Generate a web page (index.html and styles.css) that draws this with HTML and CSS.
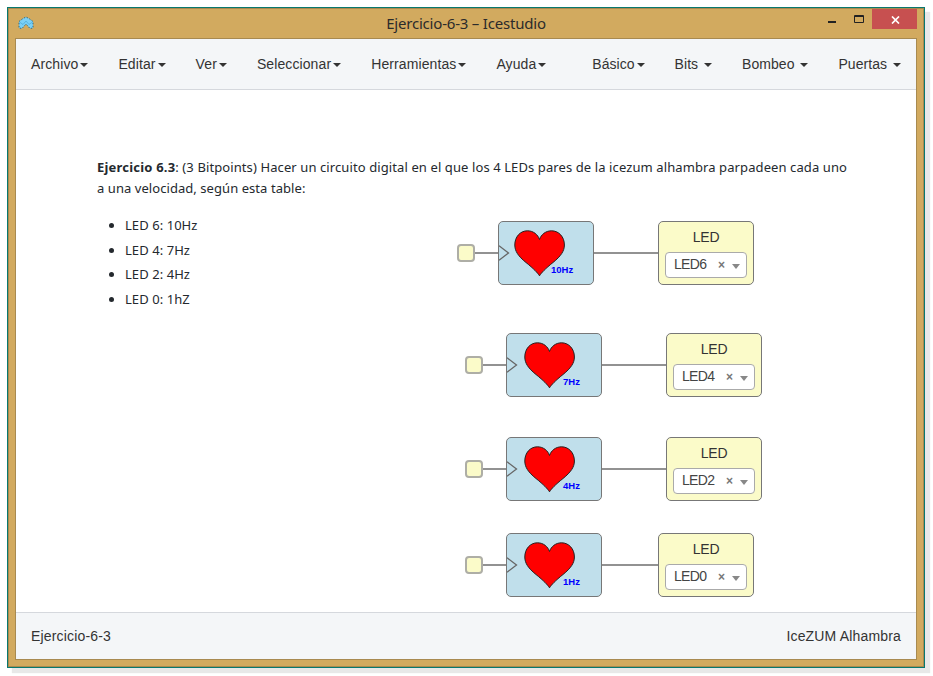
FILE: index.html
```html
<!DOCTYPE html>
<html lang="es">
<head>
<meta charset="utf-8">
<title>Ejercicio-6-3 – Icestudio</title>
<link rel="stylesheet" href="styles.css">
</head>
<body>
<svg class="defs" width="0" height="0">
  <symbol id="heart" viewBox="0 0 52 48">
    <path d="M25.500 45.800C23.800 43 19.500 38.500 12 32.500C4 26 .8 21 .8 15C.8 7 6 .8 13.500 .8C19.500 .8 24 4.800 25.500 9.500C27 4.800 31.500 .8 37.500 .8C45 .8 50.400 7 50.400 15C50.400 21 47 26 39 32.500C31.500 38.500 27.200 43 25.500 45.800Z" fill="#f00" stroke="#222" stroke-width="1"/>
  </symbol>
</svg>
<div class="window">
  <header class="titlebar">
    <svg class="logo" width="16" height="14" viewBox="0 0 16 14">
      <path d="M1 5.500L5 2.500L8 1L11 2.500L15 5.500V12L12 12.500L8 8L4 12.500L1 12Z" fill="#7bd0f6"/>
      <path d="M1 5.500L5 2.500L8 1L11 2.500L15 5.500V12L12 12.500L8 8L4 12.500L1 12Z" fill="none" stroke="#326b80" stroke-width="1" stroke-dasharray="1.500 1.500"/>
      <path d="M1.500 6L5 8.500L8 5L11 8.500L14.500 6" fill="none" stroke="#49a9d8" stroke-width=".7"/>
    </svg>
    <h1 class="title"><span>Ejercicio-6-3 – Icestudio</span></h1>
    <div class="controls">
      <svg width="37" height="20" viewBox="0 0 37 20"><path d="M0 12h8v2H0z" fill="#222"/><path d="M26.500 6.500h9v7h-9zM26.500 7.500h9" fill="none" stroke="#222"/></svg>
      <span class="close"><svg width="9" height="8" viewBox="0 0 9 8"><path d="M1 .5L8 7.500M8 .5L1 7.500" stroke="#fff" stroke-width="1.700"/></svg></span>
    </div>
  </header>
  <main class="app">
    <nav class="menu">
      <ul>
        <li>Archivo<b class="caret"></b></li><li>Editar<b class="caret"></b></li><li>Ver<b class="caret"></b></li><li>Seleccionar<b class="caret"></b></li><li>Herramientas<b class="caret"></b></li><li>Ayuda<b class="caret"></b></li>
      </ul>
      <ul class="right">
        <li>Básico<b class="caret"></b></li><li>Bits <b class="caret"></b></li><li>Bombeo <b class="caret"></b></li><li>Puertas <b class="caret"></b></li>
      </ul>
    </nav>
    <section class="canvas">
      <article class="note">
        <p><span class="first"><strong>Ejercicio 6.3</strong>: (3 Bitpoints) Hacer un circuito digital en el que los 4 LEDs pares de la icezum alhambra parpadeen cada uno</span><br>a una velocidad, según esta table:</p>
        <ul>
          <li>LED 6: 10Hz</li>
          <li>LED 4: 7Hz</li>
          <li>LED 2: 4Hz</li>
          <li>LED 0: 1hZ</li>
        </ul>
      </article>
      <svg class="wires" width="900" height="522">
        <path d="M458 163h25M578 163h64M466 275h25M586 275h64M466 379h25M586 379h64M466 475h25M586 475h56" stroke="#929292" stroke-width="2"/>
      </svg>
      <i class="port p1"></i>
      <div class="block b1"><svg class="arrow" width="11" height="16"><path d="M0 .8L9.500 8L0 15.200"/></svg><svg class="heart"><use href="#heart"/></svg><span class="freq">10Hz</span></div>
      <div class="led l1"><span>LED</span><div class="select"><span>LED6</span><em>×</em><i></i></div></div>

      <i class="port p2"></i>
      <div class="block b2"><svg class="arrow" width="11" height="16"><path d="M0 .8L9.500 8L0 15.200"/></svg><svg class="heart"><use href="#heart"/></svg><span class="freq">7Hz</span></div>
      <div class="led l2"><span>LED</span><div class="select"><span>LED4</span><em>×</em><i></i></div></div>

      <i class="port p3"></i>
      <div class="block b3"><svg class="arrow" width="11" height="16"><path d="M0 .8L9.500 8L0 15.200"/></svg><svg class="heart"><use href="#heart"/></svg><span class="freq">4Hz</span></div>
      <div class="led l3"><span>LED</span><div class="select"><span>LED2</span><em>×</em><i></i></div></div>

      <i class="port p4"></i>
      <div class="block b4"><svg class="arrow" width="11" height="16"><path d="M0 .8L9.500 8L0 15.200"/></svg><svg class="heart"><use href="#heart"/></svg><span class="freq">1Hz</span></div>
      <div class="led l4"><span>LED</span><div class="select"><span>LED0</span><em>×</em><i></i></div></div>
    </section>
    <footer class="status"><span>Ejercicio-6-3</span><span>IceZUM Alhambra</span></footer>
  </main>
</div>
</body>
</html>
```
FILE: styles.css
```css
* { box-sizing: border-box; }
body {
  margin: 0;
  padding: 7px 8px 8px 7px;
  height: 676px;
  overflow: hidden;
  background: #fff;
  color: #333;
  font: 14px/20px "Liberation Sans", Arial, sans-serif;
}
ul, p, h1 { margin: 0; padding: 0; }
.defs { position: absolute; }
.window {
  width: 918px;
  height: 661px;
  display: flex;
  flex-direction: column;
  padding: 0 7px 7px;
  border: 1px solid #08786e;
  background: #d2aa5f;
  box-shadow: inset 0 0 0 1px #a88a50, 5px 5px 1px #e8e8e8;
}
.titlebar {
  height: 30px;
  flex: none;
  display: grid;
  grid-template-columns: 90px 1fr 90px;
  align-items: start;
}
.logo { margin: 8px 0 0 3px; }
.title {
  color: #2b2b2b;
  font: 15px/30px "Noto Sans", "Open Sans", sans-serif;
  text-align: center;
  white-space: nowrap;
}
.title span { letter-spacing: -.2px; }
.controls { display: flex; justify-content: flex-end; padding-top: 1px; gap: 7px; }
.close {
  width: 45px;
  height: 20px;
  flex: none;
  display: flex;
  align-items: center;
  justify-content: center;
  padding: 1px 0 0 1px;
  background: #c75050;
}
.app {
  flex: 1;
  min-height: 0;
  display: flex;
  flex-direction: column;
  border: 1px solid #a88a50;
  background: #fff;
}
.menu {
  height: 51px;
  flex: none;
  display: flex;
  justify-content: space-between;
  border-bottom: 1px solid #d5d8dd;
  background: #f4f6f8;
}
.menu ul { display: flex; list-style: none; }
.menu li { padding: 15px; white-space: nowrap; letter-spacing: .1px; }
.menu .right li { letter-spacing: .05px; }
.caret {
  display: inline-block;
  margin-left: 2px;
  vertical-align: middle;
  border: 4px solid transparent;
  border-top-color: #333;
  border-bottom: 0;
}
.canvas { position: relative; flex: 1; overflow: hidden; }
.note {
  padding: 67px 0 0 81px;
  color: #24292e;
  font: 13px/21px "Noto Sans", "Open Sans", sans-serif;
  letter-spacing: .06px;
  white-space: nowrap;
}
.first { letter-spacing: .1px; }
.first strong { letter-spacing: .2px; }
.note ul { padding: 14px 0 0 28px; line-height: 24.5px; }
.wires { position: absolute; inset: 0; }
.port {
  position: absolute;
  width: 18px;
  height: 18px;
  border: 2px solid #aeaea6;
  border-radius: 4px;
  background: #fbfbc9;
}
.block, .led {
  position: absolute;
  width: 96px;
  height: 64px;
  border: 1px solid #777;
  border-radius: 5px;
}
.block { background: #c0dfeb; }
.arrow { position: absolute; left: 0; top: 23px; fill: none; stroke: #666; stroke-width: 1.3; }
.heart { position: absolute; left: 17px; top: 8px; width: 52px; height: 48px; }
.freq {
  position: absolute;
  left: 56px;
  top: 42px;
  color: #00f;
  font: bold 9.500px/12px "Liberation Sans", Arial, sans-serif;
}
.b1 .heart { left: 15px; }
.b1 .freq { left: 52px; }
.led {
  display: flex;
  flex-direction: column;
  align-items: center;
  padding-top: 5px;
  background: #fbfbc9;
}
.led > span { letter-spacing: -.2px; }
.select {
  width: 82px;
  height: 26px;
  margin-top: 5px;
  display: flex;
  align-items: center;
  padding: 0 6px 2px 8px;
  border: 1px solid #aaa;
  border-radius: 4px;
  background: #fff;
  color: #444;
}
.select span { letter-spacing: -.7px; }
.select em { margin: 1px 0 0 auto; color: #777; font: bold 12px/20px "Liberation Sans", Arial, sans-serif; }
.select i {
  margin: 5px 0 0 7px;
  border: 4px solid transparent;
  border-top: 5px solid #888;
  border-bottom: 0;
}
.p1 { left: 441px; top: 154px; }
.p2 { left: 449px; top: 266px; }
.p3 { left: 449px; top: 370px; }
.p4 { left: 449px; top: 466px; }
.b1 { left: 482px; top: 131px; }
.b2 { left: 490px; top: 243px; }
.b3 { left: 490px; top: 347px; }
.b4 { left: 490px; top: 443px; }
.l1 { left: 642px; top: 131px; }
.l2 { left: 650px; top: 243px; }
.l3 { left: 650px; top: 347px; }
.l4 { left: 642px; top: 443px; }
.status {
  height: 47px;
  flex: none;
  display: flex;
  align-items: center;
  justify-content: space-between;
  padding: 0 15px;
  border-top: 1px solid #d5d8dd;
  background: #f4f6f8;
  letter-spacing: .17px;
}
```
